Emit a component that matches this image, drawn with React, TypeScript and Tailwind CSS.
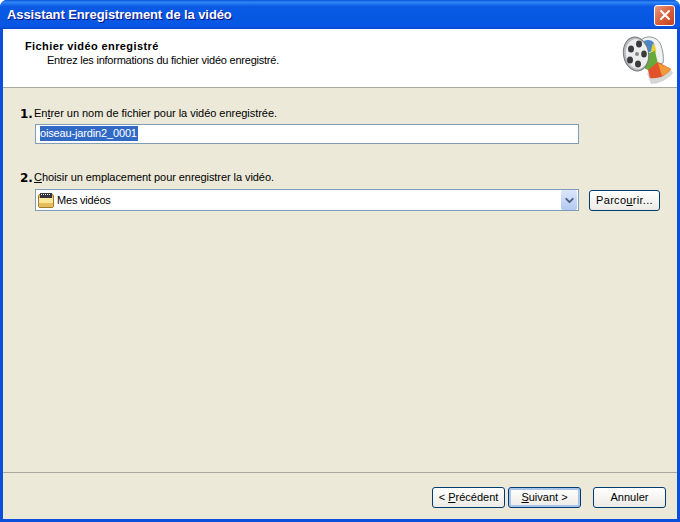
import { ChevronDown, X } from "lucide-react";

const ui = "font-['Liberation_Sans',sans-serif]";

const FilmIcon = () => (
  <svg width="58" height="58" viewBox="0 0 58 58">
    <path d="M30 44 L52 38 L56 44 C50 52 40 55 34 55 Z" fill="#000" opacity="0.16" />
    {/* bande */}
    <path d="M24 11 C29 6 39 7 43 14 C46 21 47 29 46 34 L28 38 Z" fill="#f1f3f3" stroke="#8f9496" strokeWidth="1" />
    <path d="M27 12 C31 10 35 11 37 14 L38 21 L30 24 Z" fill="#4a86c8" />
    <path d="M36 14 C38 16 39 19 39 23 L37 26 L34 21 Z" fill="#e6cd36" />
    <path d="M29 25 L38 22 L41 35 L33 42 L27 39 Z" fill="#68aa3a" />
    <path d="M31 41 L41 33 L54 40 C49 47 42 50 33 49 Z" fill="#e2532c" />
    <path d="M41 34 L54 40 C51 44 48 46 45 47 Z" fill="#ef9b38" />
    {/* bobine */}
    <ellipse cx="19" cy="25" rx="12.5" ry="17" transform="rotate(-10 19 25)" fill="#b9bcbe" stroke="#75797c" strokeWidth="1" />
    <ellipse cx="20" cy="25" rx="11" ry="15" transform="rotate(-10 20 25)" fill="#eceeee" />
    <circle cx="20" cy="25" r="2" fill="#85888a" />
    <ellipse cx="14" cy="20" rx="3" ry="3.6" fill="#3c3c3c" />
    <ellipse cx="22" cy="15" rx="3" ry="3.4" fill="#3c3c3c" />
    <ellipse cx="27" cy="25" rx="2.8" ry="3.6" fill="#3c3c3c" />
    <ellipse cx="21" cy="35" rx="3" ry="3.6" fill="#3c3c3c" />
    <ellipse cx="13" cy="31" rx="3" ry="3.6" fill="#3c3c3c" />
  </svg>
);

const FolderIcon = () => (
  <svg width="16" height="15" viewBox="0 0 16 15">
    <rect x="0.5" y="1.5" width="15" height="13" rx="1.5" fill="#e8bd55" stroke="#a07c35" />
    <rect x="2" y="0" width="12" height="5" fill="#33333d" />
    <path d="M3 1h1v1H3zM5 1h1v1H5zM7 1h1v1H7zM9 1h1v1H9zM11 1h1v1h-1z" fill="#f2f2f2" />
    <rect x="1" y="5" width="14" height="5" fill="#fbe79c" />
    <rect x="1" y="10" width="14" height="4" fill="#e6bc5a" />
  </svg>
);

const StepNumber = ({ children }: { children: React.ReactNode }) => (
  <span className="w-[14px] shrink-0 translate-y-[1px] font-['DejaVu_Sans',sans-serif] text-[12px] font-bold leading-[16px]">
    {children}
  </span>
);

const WizardButton = ({
  children,
  active = false,
  width,
  className = "",
}: {
  children: React.ReactNode;
  active?: boolean;
  width: string;
  className?: string;
}) => (
  <button
    className={`${width} ${className} h-[21px] shrink-0 rounded-[3px] border border-[#003c74] bg-gradient-to-b from-white to-[#ecebe5] text-[11px] leading-none text-black ${
      active ? "shadow-[inset_0_0_0_2px_#a9c4ea]" : ""
    }`}
  >
    {children}
  </button>
);

export default function App() {
  return (
    <div className={`${ui} flex h-[522px] w-[680px] flex-col overflow-hidden rounded-t-[7px] bg-[#0a4fdc]`}>
      {/* Barre de titre */}
      <div className="flex h-[29px] shrink-0 items-center justify-between bg-[linear-gradient(#0a55d8,#2f86f5_8%,#0a5ae6_22%,#0658e2_70%,#0a55e8_90%,#0446c8)] pl-[7px] pr-[5px] pt-[1px]">
        <span className="text-[13px] font-bold tracking-[-0.1px] text-white [text-shadow:1px_1px_#0f1089]">
          Assistant Enregistrement de la vidéo
        </span>
        <button className="flex h-[21px] w-[21px] items-center justify-center rounded-[3px] border border-white bg-gradient-to-br from-[#e79a7e] via-[#d9613c] to-[#c2401f]">
          <X size={16} strokeWidth={3} color="#fff" />
        </button>
      </div>

      <div className="mx-[3px] mb-[3px] flex min-h-0 flex-1 flex-col bg-[#ece9d8]">
        {/* En-tete blanc */}
        <div className="flex h-[59px] shrink-0 justify-between border-b border-[#a9a89e] bg-white pl-[22px] pr-[2px]">
          <div className="pt-[10px] text-[11px] leading-[14px] text-black">
            <div className="font-bold tracking-[0.4px]">Fichier vidéo enregistré</div>
            <div className="pl-[22px] tracking-[-0.23px]">Entrez les informations du fichier vidéo enregistré.</div>
          </div>
          <FilmIcon />
        </div>

        {/* Etapes */}
        <div className="flex flex-1 flex-col pl-[17px] pr-[17px] pt-[17px] text-[11px] text-black">
          <div className="flex items-baseline">
            <StepNumber>1.</StepNumber>
            <span className="tracking-[-0.03px]">
              En<u>t</u>rer un nom de fichier pour la vidéo enregistrée.
            </span>
          </div>
          <div className="ml-[15px] mt-[2px] flex h-[20px] w-[544px] items-center border border-[#7f9db9] bg-white pl-[4px]">
            <span className="bg-[#316ac5] pr-[1px] leading-[15px] tracking-[-0.15px] text-white">oiseau-jardin2_0001</span>
          </div>

          <div className="mt-[25px] flex items-baseline">
            <StepNumber>2.</StepNumber>
            <span className="tracking-[-0.07px]">
              <u>C</u>hoisir un emplacement pour enregistrer la vidéo.
            </span>
          </div>
          <div className="ml-[15px] mt-[4px] flex items-center gap-[10px]">
            <div className="flex h-[22px] w-[544px] items-center justify-between border border-[#7f9db9] bg-white pl-[2px] pr-[1px]">
              <div className="flex items-center gap-[3px]">
                <FolderIcon />
                <span className="tracking-[-0.2px]">Mes vidéos</span>
              </div>
              <div className="flex h-[20px] w-[16px] items-center justify-center rounded-[2px] bg-gradient-to-b from-[#dbe6fb] to-[#b3c9f2]">
                <ChevronDown size={13} strokeWidth={3.5} color="#4d6185" />
              </div>
            </div>
            <WizardButton width="w-[71px]" className="tracking-[0.3px]">
              Parco<u>u</u>rir...
            </WizardButton>
          </div>
        </div>

        {/* Pied */}
        <div className="flex h-[47px] shrink-0 items-start justify-end border-t border-[#a9a89e] pr-[11px] pt-[14px]">
          <WizardButton width="w-[73px]">
            &lt; <u>P</u>récédent
          </WizardButton>
          <WizardButton width="w-[73px]" className="ml-[3px]" active>
            <u>S</u>uivant &gt;
          </WizardButton>
          <WizardButton width="w-[73px]" className="ml-[12px]">
            Annuler
          </WizardButton>
        </div>
      </div>
    </div>
  );
}
